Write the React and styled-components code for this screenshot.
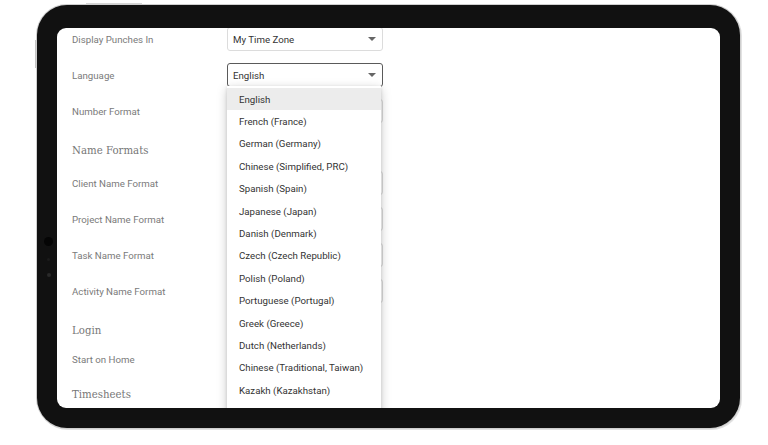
import styled, { createGlobalStyle } from "styled-components";

const GlobalStyle = createGlobalStyle`
  html, body {
    margin: 0;
    background: #fff;
    font-family: Roboto, "Liberation Sans", sans-serif;
  }
`;

const Stage = styled.div`
  position: relative;
  width: 768px;
  height: 445px;
  box-sizing: border-box;
  padding: 5px 0 0 37px;
  overflow: hidden;
`;

// hardware buttons on the outer rim
const TopButtons = styled.div`
  position: absolute;
  top: 3px;
  left: 86px;
  width: 56px;
  height: 2px;
  background: #d6d6d6;
`;

const SideButton = styled.div`
  position: absolute;
  top: 40px;
  left: 35px;
  width: 2px;
  height: 28px;
  background: #c4c4c4;
`;

const Device = styled.div`
  position: relative;
  width: 703px;
  height: 423px;
  box-sizing: border-box;
  padding: 23px 20px 20px 20px;
  background: #111;
  border-radius: 30px;
  box-shadow: 0 0 0 1px #cfcfcf, 1px 1px 0 1px #e2e2e2;
`;

const CameraGroup = styled.div`
  position: absolute;
  left: 7px;
  top: 232px;
  width: 9px;
  display: flex;
  flex-direction: column;
  align-items: center;
  gap: 12px;
`;

const Lens = styled.div`
  width: ${(p) => p.$size}px;
  height: ${(p) => p.$size}px;
  border-radius: 50%;
  background: ${(p) => p.$color};
`;

const Screen = styled.div`
  width: 100%;
  height: 100%;
  background: #fff;
  border-radius: 9px;
  overflow: hidden;
`;

const Content = styled.div`
  margin-top: -7px;
  padding-left: 15px;
`;

const Row = styled.div`
  display: flex;
  align-items: center;
  height: ${(p) => p.$h || 36}px;
`;

const Label = styled.div`
  width: 155px;
  font-size: 9.7px;
  color: #7a7a7a;
`;

const Select = styled.div`
  position: relative;
  width: 156px;
  height: 24px;
  box-sizing: border-box;
  display: flex;
  align-items: center;
  justify-content: space-between;
  padding: 0 6px 0 5px;
  border: 1px solid ${(p) => (p.$focused ? "#5a5a5a" : "#dcdcdc")};
  border-radius: 3px;
  font-size: 9.7px;
  color: #333;
  background: #fff;
`;

const Caret = styled.span`
  width: 0;
  height: 0;
  border-left: 4px solid transparent;
  border-right: 4px solid transparent;
  border-top: 4px solid #666;
`;

const SectionTitle = styled.div`
  height: 36px;
  box-sizing: border-box;
  padding-top: 7px;
  line-height: 29px;
  font-family: "DejaVu Serif", "Liberation Serif", serif;
  font-size: 10.2px;
  color: #777;
`;

const Menu = styled.div`
  position: absolute;
  top: 100%;
  left: -1px;
  width: 154px;
  padding-top: 2px;
  padding-bottom: 20px;
  background: #fff;
  box-shadow: 0 3px 10px rgba(0, 0, 0, 0.22), 0 1px 3px rgba(0, 0, 0, 0.12);
  z-index: 5;
`;

const MenuItem = styled.div`
  height: 22.4px;
  display: flex;
  align-items: center;
  padding-left: 12px;
  font-size: 9.7px;
  color: #333;
  background: ${(p) => (p.$active ? "#ececec" : "#fff")};
`;

const languages = [
  "English",
  "French (France)",
  "German (Germany)",
  "Chinese (Simplified, PRC)",
  "Spanish (Spain)",
  "Japanese (Japan)",
  "Danish (Denmark)",
  "Czech (Czech Republic)",
  "Polish (Poland)",
  "Portuguese (Portugal)",
  "Greek (Greece)",
  "Dutch (Netherlands)",
  "Chinese (Traditional, Taiwan)",
  "Kazakh (Kazakhstan)",
];

const Field = ({ label, value, focused, children }) => (
  <Row>
    <Label>{label}</Label>
    <Select $focused={focused}>
      <span>{value}</span>
      <Caret />
      {children}
    </Select>
  </Row>
);

const App = () => {
  return (
    <Stage>
      <GlobalStyle />
      <TopButtons />
      <SideButton />
      <Device>
        <CameraGroup>
          <Lens $size={9} $color="#050505" />
          <Lens $size={3} $color="#1c1c1c" />
          <Lens $size={4} $color="#2a2a2a" />
        </CameraGroup>
        <Screen>
          <Content>
            <Field label="Display Punches In" value="My Time Zone" />
            <Field label="Language" value="English" focused>
              <Menu>
                {languages.map((l, i) => (
                  <MenuItem key={l} $active={i === 0}>
                    {l}
                  </MenuItem>
                ))}
              </Menu>
            </Field>
            <Field label="Number Format" />
            <SectionTitle>Name Formats</SectionTitle>
            <Field label="Client Name Format" />
            <Field label="Project Name Format" />
            <Field label="Task Name Format" />
            <Field label="Activity Name Format" />
            <SectionTitle>Login</SectionTitle>
            <Row $h={28}>
              <Label>Start on Home</Label>
            </Row>
            <SectionTitle>Timesheets</SectionTitle>
          </Content>
        </Screen>
      </Device>
    </Stage>
  );
};

export default App;
